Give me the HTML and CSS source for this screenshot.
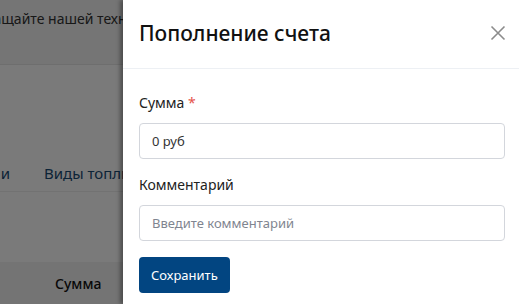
FILE: index.html
```html
<!DOCTYPE html>
<html lang="ru">
<head>
<meta charset="utf-8">
<link rel="stylesheet" href="styles.css">
</head>
<body>
<div class="page">
  <div class="page-top"><span class="notice">Обращайте нашей технической поддержке</span></div>
  <div class="page-tabs"><span class="tab">Транзакции</span><span class="tab tab-link">Виды топлива</span></div>
  <div class="page-space"></div>
  <div class="page-thead"><span class="th">Сумма</span></div>
</div>
<div class="overlay"></div>
<aside class="drawer">
  <header class="drawer-header">
    <h1 class="drawer-title">Пополнение счета</h1>
    <button class="close" aria-label="Закрыть">
      <svg width="16" height="16" viewBox="0 0 16 16"><path d="M1.5 1.5 L14.5 14.5 M14.5 1.5 L1.5 14.5" stroke="#8c8c8c" stroke-width="1.6" fill="none"/></svg>
    </button>
  </header>
  <form class="drawer-body">
    <label class="field">
      <span class="label">Сумма <span class="req">*</span></span>
      <input class="input" type="text" value="0 руб">
    </label>
    <label class="field">
      <span class="label">Комментарий</span>
      <input class="input" type="text" placeholder="Введите комментарий">
    </label>
    <div><button type="button" class="btn">Сохранить</button></div>
  </form>
</aside>
</body>
</html>
```
FILE: styles.css
```css
* { box-sizing: border-box; }
html, body { margin: 0; padding: 0; }
body {
  width: 519px; height: 304px; overflow: hidden; position: relative;
  font-family: "Noto Sans", "Open Sans", sans-serif;
  background: #fff;
}
.page { display: flex; flex-direction: column; height: 304px; width: 123px; overflow: hidden; }
.page-top { height: 65px; background: #f4f4f4; border-bottom: 1px solid #e6e6e6; display: flex; align-items: flex-start; padding-top: 9px; }
.notice { font-size: 14px; color: #333; margin-left: -34px; white-space: nowrap; }
.page-tabs { height: 127px; border-bottom: 1px solid #eee; display: flex; align-items: flex-end; padding-bottom: 8px; gap: 34px; white-space: nowrap; }
.tab { font-size: 15px; color: #1a4a73; }
.tab:first-child { margin-left: -76px; }
.page-space { height: 70px; }
.page-thead { flex: 1; background: #f2f2f2; display: flex; align-items: center; padding-left: 55px; }
.th { font-size: 14px; color: #111; font-weight: 500; }
.overlay { position: absolute; inset: 0; background: rgba(0,0,0,0.52); }
.drawer {
  position: absolute; top: 0; right: 0; bottom: 0; width: 396px;
  background: #fff; box-shadow: -3px 0 4px rgba(0,0,0,0.35);
  display: flex; flex-direction: column;
}
.drawer-header { height: 69px; border-bottom: 1px solid #edf0f4; display: flex; align-items: center; justify-content: space-between; padding: 0 13px 2px 16px; }
.drawer-title { margin: 0; font-size: 21px; font-weight: 500; color: #111; }
.close { border: 0; background: none; padding: 0; width: 16px; height: 16px; display: flex; cursor: pointer; }
.drawer-body { padding: 24px 14px 0 16px; display: flex; flex-direction: column; gap: 16px; }
.field { display: flex; flex-direction: column; gap: 11px; }
.label { font-size: 14px; color: #222; }
.req { color: #e5534b; }
.input {
  height: 36px; border: 1px solid #d3d6dc; border-radius: 4px; padding: 0 12px;
  font: inherit; font-size: 13px; color: #333; outline: none;
}
.input::placeholder { color: #7f8590; }
.btn {
  height: 36px; padding: 0 12px; border: 0; border-radius: 4px; background: #024581;
  color: #fff; font: inherit; font-size: 13px; cursor: pointer;
}
```
